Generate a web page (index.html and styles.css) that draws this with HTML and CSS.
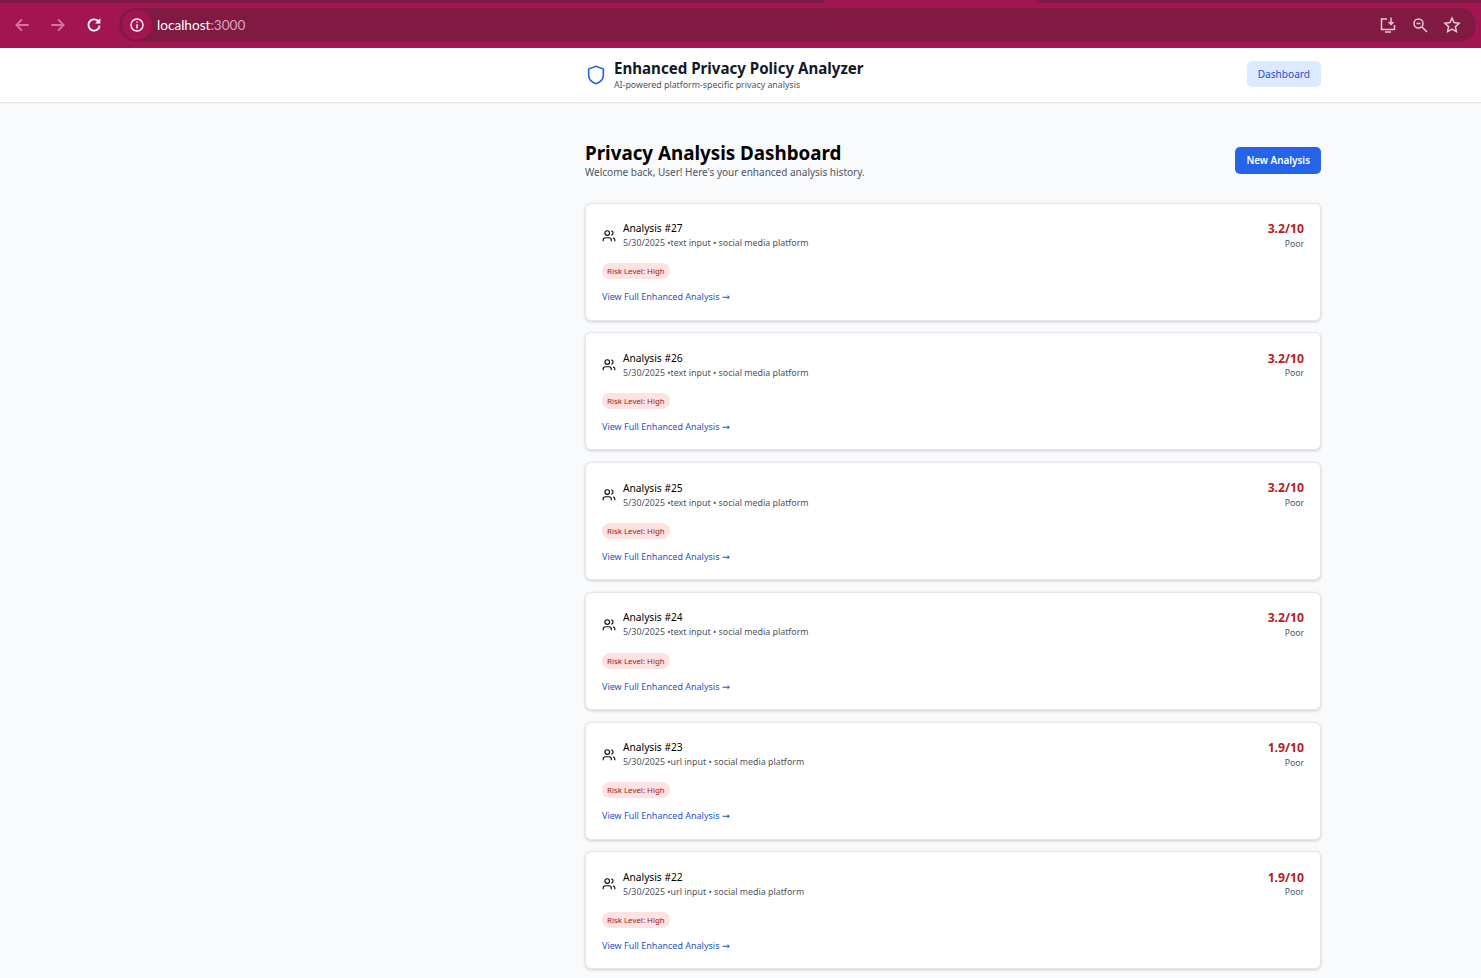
FILE: index.html
```html
<!DOCTYPE html>
<html>
<head>
    <title>Enhanced Privacy Policy Analyzer</title>
    <link rel="stylesheet" href="styles.css">
</head>
<body>
    <!-- browser toolbar -->
    <div class="browser">
        <div class="tabstrip">
            <div class="strip-left"></div>
            <div class="strip-tab"></div>
            <div class="strip-right"></div>
        </div>
        <div class="toolbar">
            <svg class="nav-icon dim" viewBox="0 0 16 16"><path d="M14 8H3M8 3 3 8l5 5"/></svg>
            <svg class="nav-icon dim" viewBox="0 0 16 16"><path d="M2 8h11M8 3l5 5-5 5"/></svg>
            <svg class="nav-icon" viewBox="0 0 16 16"><path d="M13 8.5A5 5 0 1 1 11.5 4.4L13 6"/><path class="solid" d="M13.6 2v4.6H9z"/></svg>
            <div class="omnibox">
                <div class="site-info">
                    <svg viewBox="0 0 16 16"><circle cx="8" cy="8" r="6"/><path d="M8 7.2V11.500M8 4.500v1.300"/></svg>
                </div>
                <span class="url">localhost<span class="port">:3000</span></span>
                <div class="omni-actions">
                    <svg viewBox="0 0 18 18"><path d="M8 3H2.500v10.500h13V9M6 16h6"/><path d="M12 1.500v7M9.500 6l2.500 2.500L14.500 6"/></svg>
                    <svg viewBox="0 0 18 18"><circle cx="7.500" cy="7.500" r="4.500"/><path d="M5.500 7.500h4M11 11l5 5"/></svg>
                    <svg viewBox="0 0 18 18"><path d="M9 2l2.100 4.600 5 .6-3.700 3.400 1 5L9 13.100 4.600 15.600l1-5L1.900 7.200l5-.6z"/></svg>
                </div>
            </div>
        </div>
    </div>

    <!-- site header -->
    <header class="site-header">
        <div class="header-inner">
            <div class="brand">
                <svg class="shield" viewBox="0 0 24 24"><path d="M12 2.500 20 5.500V12c0 5-3.500 8-8 9.500C7.500 20 4 17 4 12V5.500z"/></svg>
                <div>
                    <div class="brand-title">Enhanced Privacy Policy Analyzer</div>
                    <div class="brand-sub">AI-powered platform-specific privacy analysis</div>
                </div>
            </div>
            <a class="nav-btn">Dashboard</a>
        </div>
    </header>

    <main class="main">
        <div class="page-head">
            <div>
                <h1>Privacy Analysis Dashboard</h1>
                <p>Welcome back, User! Here's your enhanced analysis history.</p>
            </div>
            <a class="primary-btn">New Analysis</a>
        </div>

        <div class="cards">
            <div class="card">
                <div class="card-top">
                    <div class="card-id">
                        <svg class="people" viewBox="0 0 24 24"><use href="#people"/></svg>
                        <div>
                            <div class="card-title">Analysis #27</div>
                            <div class="card-meta">5/30/2025 •text input • social media platform</div>
                        </div>
                    </div>
                    <div class="score">
                        <div class="score-num">3.2/10</div>
                        <div class="score-label">Poor</div>
                    </div>
                </div>
                <span class="risk">Risk Level: High</span>
                <a class="card-link">View Full Enhanced Analysis <span class="arrow">→</span></a>
            </div>
            <div class="card">
                <div class="card-top">
                    <div class="card-id">
                        <svg class="people" viewBox="0 0 24 24"><use href="#people"/></svg>
                        <div>
                            <div class="card-title">Analysis #26</div>
                            <div class="card-meta">5/30/2025 •text input • social media platform</div>
                        </div>
                    </div>
                    <div class="score">
                        <div class="score-num">3.2/10</div>
                        <div class="score-label">Poor</div>
                    </div>
                </div>
                <span class="risk">Risk Level: High</span>
                <a class="card-link">View Full Enhanced Analysis <span class="arrow">→</span></a>
            </div>
            <div class="card">
                <div class="card-top">
                    <div class="card-id">
                        <svg class="people" viewBox="0 0 24 24"><use href="#people"/></svg>
                        <div>
                            <div class="card-title">Analysis #25</div>
                            <div class="card-meta">5/30/2025 •text input • social media platform</div>
                        </div>
                    </div>
                    <div class="score">
                        <div class="score-num">3.2/10</div>
                        <div class="score-label">Poor</div>
                    </div>
                </div>
                <span class="risk">Risk Level: High</span>
                <a class="card-link">View Full Enhanced Analysis <span class="arrow">→</span></a>
            </div>
            <div class="card">
                <div class="card-top">
                    <div class="card-id">
                        <svg class="people" viewBox="0 0 24 24"><use href="#people"/></svg>
                        <div>
                            <div class="card-title">Analysis #24</div>
                            <div class="card-meta">5/30/2025 •text input • social media platform</div>
                        </div>
                    </div>
                    <div class="score">
                        <div class="score-num">3.2/10</div>
                        <div class="score-label">Poor</div>
                    </div>
                </div>
                <span class="risk">Risk Level: High</span>
                <a class="card-link">View Full Enhanced Analysis <span class="arrow">→</span></a>
            </div>
            <div class="card">
                <div class="card-top">
                    <div class="card-id">
                        <svg class="people" viewBox="0 0 24 24"><use href="#people"/></svg>
                        <div>
                            <div class="card-title">Analysis #23</div>
                            <div class="card-meta">5/30/2025 •url input • social media platform</div>
                        </div>
                    </div>
                    <div class="score">
                        <div class="score-num">1.9/10</div>
                        <div class="score-label">Poor</div>
                    </div>
                </div>
                <span class="risk">Risk Level: High</span>
                <a class="card-link">View Full Enhanced Analysis <span class="arrow">→</span></a>
            </div>
            <div class="card">
                <div class="card-top">
                    <div class="card-id">
                        <svg class="people" viewBox="0 0 24 24"><use href="#people"/></svg>
                        <div>
                            <div class="card-title">Analysis #22</div>
                            <div class="card-meta">5/30/2025 •url input • social media platform</div>
                        </div>
                    </div>
                    <div class="score">
                        <div class="score-num">1.9/10</div>
                        <div class="score-label">Poor</div>
                    </div>
                </div>
                <span class="risk">Risk Level: High</span>
                <a class="card-link">View Full Enhanced Analysis <span class="arrow">→</span></a>
            </div>
        </div>
    </main>

    <svg class="sprite" width="0" height="0">
        <symbol id="people" viewBox="0 0 24 24">
            <path d="M16 21v-2a4 4 0 0 0-4-4H6a4 4 0 0 0-4 4v2"/>
            <circle cx="9" cy="7" r="4"/>
            <path d="M22 21v-2a4 4 0 0 0-3-3.870M16 3.130a4 4 0 0 1 0 7.750"/>
        </symbol>
    </svg>
</body>
</html>
```

FILE: styles.css
```css
* {
    box-sizing: border-box;
}
html, body {
    height: 100%;
}
body {
    margin: 0;
    height: 978px;
    overflow: hidden;
    background: #f9fafb;
    font-family: "Noto Sans", "Open Sans", "Liberation Sans", sans-serif;
    color: #111827;
}

/* browser toolbar */
.browser {
    height: 48px;
    background: #a31550;
}
.tabstrip {
    display: flex;
    height: 3px;
}
.strip-left {
    width: 825px;
    background: #7e1a45;
}
.strip-right {
    flex: 1;
    background: #7e1a45;
}
.strip-tab {
    width: 212px;
    background: #a31550;
}
.toolbar {
    display: flex;
    align-items: center;
    height: 39px;
    margin-top: 2px;
    padding: 0 5px 0 13px;
}
.nav-icon {
    width: 18px;
    height: 18px;
    margin-right: 18px;
    fill: none;
    stroke: #fff;
    stroke-width: 1.700;
}
.nav-icon.dim {
    stroke: #d0769a;
}
.nav-icon .solid {
    fill: #fff;
    stroke: none;
}
.omnibox {
    display: flex;
    align-items: center;
    flex: 1;
    height: 34px;
    margin-left: -2px;
    border-radius: 17px;
    background: #801a42;
}
.site-info {
    display: flex;
    align-items: center;
    justify-content: center;
    width: 30px;
    height: 30px;
    margin-left: 3px;
    border-radius: 50%;
    background: #a31550;
}
.site-info svg {
    width: 16px;
    height: 16px;
    fill: none;
    stroke: #fff;
    stroke-width: 1.400;
}
.url {
    margin-left: 5px;
    font-family: "Lato", "Noto Sans", sans-serif;
    font-size: 13.600px;
    color: #fff;
}
.port {
    color: #dda3bb;
}
.omni-actions {
    display: flex;
    align-items: center;
    gap: 14px;
    margin-left: auto;
    padding-right: 15px;
}
.omni-actions svg {
    width: 18px;
    height: 18px;
    fill: none;
    stroke: #e6c6d3;
    stroke-width: 1.500;
}

/* site header */
.site-header {
    height: 55px;
    background: #fff;
    border-bottom: 1px solid #e5e7eb;
    box-shadow: 0 1px 2px rgba(0, 0, 0, .04);
}
.header-inner {
    display: flex;
    align-items: center;
    justify-content: space-between;
    width: 736px;
    height: 100%;
    margin-left: 585px;
    padding-bottom: 2px;
}
.brand {
    display: flex;
    align-items: center;
    gap: 7px;
    padding-top: 2px;
}
.shield {
    width: 22px;
    height: 24px;
    fill: none;
    stroke: #2563eb;
    stroke-width: 1.800;
}
.brand-title {
    font-size: 15.100px;
    font-weight: 700;
    line-height: 18px;
}
.brand-sub {
    margin-top: 2px;
    font-size: 8.800px;
    line-height: 12px;
    color: #4b5563;
}
.nav-btn {
    padding: 5px 11px;
    border-radius: 5px;
    background: #dbeafe;
    color: #1d4ed8;
    font-size: 10.100px;
    line-height: 16px;
}

/* main list */
.main {
    width: 736px;
    margin-left: 585px;
}
.page-head {
    display: flex;
    align-items: center;
    justify-content: space-between;
    height: 99.700px;
    padding-top: 14px;
}
.page-head h1 {
    margin: 0;
    font-size: 18.800px;
    font-weight: 700;
    line-height: 24px;
    color: #000;
}
.page-head p {
    margin: 0;
    font-size: 10px;
    line-height: 14px;
    color: #4b5563;
}
.primary-btn {
    margin-top: 2px;
    padding: 6px 11px 7px;
    border-radius: 5px;
    background: #2563eb;
    color: #fff;
    font-size: 9.900px;
    font-weight: 600;
    line-height: 14px;
}
.cards {
    display: flex;
    flex-direction: column;
    gap: 11.750px;
}
.card {
    display: flex;
    flex-direction: column;
    align-items: flex-start;
    height: 118px;
    padding: 17px 16px 16px;
    background: #fff;
    border: 1px solid #e5e7eb;
    border-radius: 6px;
    box-shadow: 0 1px 3px rgba(0, 0, 0, .18);
}
.card-top {
    display: flex;
    justify-content: space-between;
    width: 100%;
}
.card-id {
    display: flex;
    align-items: center;
    gap: 7px;
}
.people {
    width: 14px;
    height: 14px;
    fill: none;
    stroke: #111;
    stroke-width: 2;
}
.sprite {
    position: absolute;
}
.card-title {
    font-size: 10.200px;
    line-height: 15px;
    color: #000;
}
.card-meta {
    margin-top: 1px;
    font-size: 8.850px;
    line-height: 13px;
    color: #4b5563;
}
.score {
    padding-top: .3px;
    text-align: right;
}
.score-num {
    font-size: 12.200px;
    font-weight: 700;
    line-height: 15px;
    color: #b91c1c;
}
.score-label {
    margin-top: 1.700px;
    font-size: 8.700px;
    line-height: 13px;
    color: #4b5563;
}
.risk {
    margin-top: 12.700px;
    padding: 2px 5px;
    border-radius: 9px;
    background: #fee2e2;
    color: #991b1b;
    font-size: 7.900px;
    line-height: 12px;
}
.card-link {
    margin-top: 12px;
    font-size: 9px;
    line-height: 12px;
    color: #2456c8;
}
.arrow {
    font-family: "DejaVu Sans", sans-serif;
    font-size: 9.500px;
}
```
